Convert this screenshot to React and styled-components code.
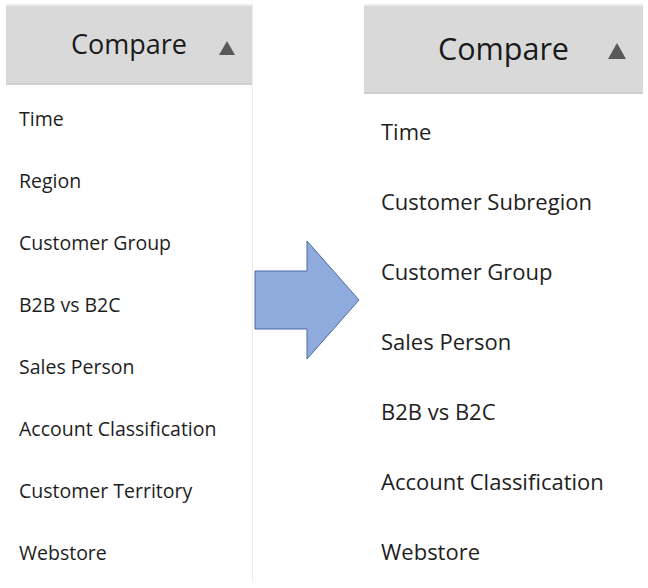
import styled, { createGlobalStyle } from "styled-components"

const GlobalStyle = createGlobalStyle`
  body {
    margin: 0;
    background: #ffffff;
    font-family: "Open Sans", "Noto Sans", sans-serif;
    color: #1e1e1e;
  }
`

const leftItems = [
  "Time",
  "Region",
  "Customer Group",
  "B2B vs B2C",
  "Sales Person",
  "Account Classification",
  "Customer Territory",
  "Webstore",
]

const rightItems = [
  "Time",
  "Customer Subregion",
  "Customer Group",
  "Sales Person",
  "B2B vs B2C",
  "Account Classification",
  "Webstore",
]

const ComparePanel = ({ items, small }) => (
  <Panel $small={small}>
    <Header $small={small}>
      <Title $small={small}>Compare</Title>
      <Caret $small={small} />
    </Header>
    <List $small={small}>
      {items.map((item) => (
        <Item key={item} $small={small}>{item}</Item>
      ))}
    </List>
  </Panel>
)

export default function App() {
  return (
    <>
      <GlobalStyle />
      <Page>
        <ComparePanel items={leftItems} small />
        <ArrowBox>
          <svg width="108" height="122" viewBox="0 0 108 122">
            <path
              d="M1 31 H53 V1 L105 60 L53 119 V89 H1 Z"
              fill="#8faadc"
              stroke="#4a68a3"
              strokeWidth="1"
            />
          </svg>
        </ArrowBox>
        <ComparePanel items={rightItems} />
      </Page>
    </>
  )
}

const Page = styled.div`
  display: flex;
  align-items: flex-start;
  padding: 4px 0 0 6px;
  width: 648px;
  height: 588px;
  box-sizing: border-box;
  overflow: hidden;
`

const Panel = styled.div`
  width: ${(p) => (p.$small ? "247px" : "279px")};
  flex-shrink: 0;
  border-top: 2px solid #ececec;
  border-right: ${(p) => (p.$small ? "1px solid #ececec" : "none")};
  box-sizing: border-box;
  height: ${(p) => (p.$small ? "578px" : "auto")};
`

const Header = styled.div`
  position: relative;
  display: flex;
  align-items: center;
  justify-content: center;
  height: ${(p) => (p.$small ? "77px" : "86px")};
  background: #d9d9d9;
  border-bottom: 2px solid #cfcfcf;
`

const Title = styled.span`
  font-size: ${(p) => (p.$small ? "27px" : "30.5px")};
  color: #1a1a1a;
  margin-top: -2px;
`

const Caret = styled.span`
  position: absolute;
  right: 17px;
  top: ${(p) => (p.$small ? "35px" : "37px")};
  width: 0;
  height: 0;
  border-left: ${(p) => (p.$small ? "8px" : "9.5px")} solid transparent;
  border-right: ${(p) => (p.$small ? "8px" : "9.5px")} solid transparent;
  border-bottom: ${(p) => (p.$small ? "14px" : "16px")} solid #595959;
`

const List = styled.div`
  display: flex;
  flex-direction: column;
  padding-top: 2px;
`

const Item = styled.div`
  display: flex;
  align-items: center;
  height: ${(p) => (p.$small ? "62px" : "70px")};
  padding-left: ${(p) => (p.$small ? "13px" : "17px")};
  font-size: ${(p) => (p.$small ? "19.5px" : "22px")};
  white-space: nowrap;
`

const ArrowBox = styled.div`
  margin: 236px 2px 0 1px;
  flex-shrink: 0;
`
